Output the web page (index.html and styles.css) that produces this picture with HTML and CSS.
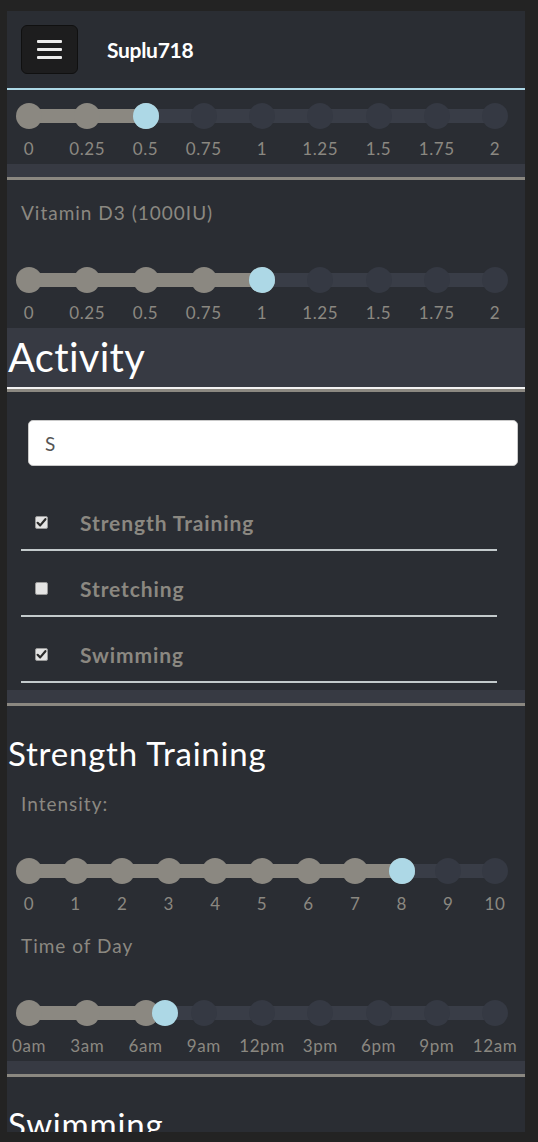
FILE: index.html
```html
<!DOCTYPE html>
<html lang="en">
<head>
<meta charset="utf-8">
<title>Suplu718</title>
<link rel="stylesheet" href="styles.css">
</head>
<body>
<div class="app">
  <header class="topbar">
    <button class="menu-btn" type="button" aria-label="Menu">
      <span class="bar"></span><span class="bar"></span><span class="bar"></span>
    </button>
    <span class="brand">Suplu718</span>
  </header>

  <main class="content">
    <section class="supp supp-first">
      <div class="slider" style="--pct:0.25">
        <div class="track"></div>
        <span class="dot on"></span><span class="dot on"></span><span class="dot on"></span><span class="dot"></span><span class="dot"></span><span class="dot"></span><span class="dot"></span><span class="dot"></span><span class="dot"></span>
        <span class="thumb"></span>
      </div>
      <div class="ticks">
        <span class="tick">0</span><span class="tick">0.25</span><span class="tick">0.5</span><span class="tick">0.75</span><span class="tick">1</span><span class="tick">1.25</span><span class="tick">1.5</span><span class="tick">1.75</span><span class="tick">2</span>
      </div>
    </section>
    <div class="band"></div>

    <section class="supp">
      <div class="field-label">Vitamin D3 (1000IU)</div>
      <div class="slider" style="--pct:0.5">
        <div class="track"></div>
        <span class="dot on"></span><span class="dot on"></span><span class="dot on"></span><span class="dot on"></span><span class="dot on"></span><span class="dot"></span><span class="dot"></span><span class="dot"></span><span class="dot"></span>
        <span class="thumb"></span>
      </div>
      <div class="ticks">
        <span class="tick">0</span><span class="tick">0.25</span><span class="tick">0.5</span><span class="tick">0.75</span><span class="tick">1</span><span class="tick">1.25</span><span class="tick">1.5</span><span class="tick">1.75</span><span class="tick">2</span>
      </div>
    </section>

    <div class="section-head">
      <h1 class="section-title">Activity</h1>
    </div>

    <section class="activity">
      <input class="search" type="text" value="S" aria-label="Search activities">
      <ul class="act-list">
        <li class="act-item">
          <span class="check checked"><svg viewBox="0 0 13 13" width="13" height="13"><path d="M2.6 6.8 L5.2 9.4 L10.4 3.2" fill="none" stroke="#2b2b2b" stroke-width="2.2" stroke-linecap="round" stroke-linejoin="round"/></svg></span>
          <span class="act-name">Strength Training</span>
        </li>
        <li class="act-item">
          <span class="check"></span>
          <span class="act-name">Stretching</span>
        </li>
        <li class="act-item">
          <span class="check checked"><svg viewBox="0 0 13 13" width="13" height="13"><path d="M2.6 6.8 L5.2 9.4 L10.4 3.2" fill="none" stroke="#2b2b2b" stroke-width="2.2" stroke-linecap="round" stroke-linejoin="round"/></svg></span>
          <span class="act-name">Swimming</span>
        </li>
      </ul>
    </section>
    <div class="band"></div>

    <section class="detail">
      <h2 class="detail-title">Strength Training</h2>
      <div class="field-label field-label-tight">Intensity:</div>
      <div class="slider" style="--pct:0.8">
        <div class="track"></div>
        <span class="dot on"></span><span class="dot on"></span><span class="dot on"></span><span class="dot on"></span><span class="dot on"></span><span class="dot on"></span><span class="dot on"></span><span class="dot on"></span><span class="dot on"></span><span class="dot"></span><span class="dot"></span>
        <span class="thumb"></span>
      </div>
      <div class="ticks">
        <span class="tick">0</span><span class="tick">1</span><span class="tick">2</span><span class="tick">3</span><span class="tick">4</span><span class="tick">5</span><span class="tick">6</span><span class="tick">7</span><span class="tick">8</span><span class="tick">9</span><span class="tick">10</span>
      </div>
      <div class="field-label field-label-mid">Time of Day</div>
      <div class="slider" style="--pct:0.2917">
        <div class="track"></div>
        <span class="dot on"></span><span class="dot on"></span><span class="dot on"></span><span class="dot"></span><span class="dot"></span><span class="dot"></span><span class="dot"></span><span class="dot"></span><span class="dot"></span>
        <span class="thumb"></span>
      </div>
      <div class="ticks">
        <span class="tick">0am</span><span class="tick">3am</span><span class="tick">6am</span><span class="tick">9am</span><span class="tick">12pm</span><span class="tick">3pm</span><span class="tick">6pm</span><span class="tick">9pm</span><span class="tick">12am</span>
      </div>
    </section>
    <div class="band"></div>

    <section class="detail">
      <h2 class="detail-title">Swimming</h2>
    </section>
  </main>
</div>
</body>
</html>
```

FILE: styles.css
```css
* {
  box-sizing: border-box;
}

html, body {
  margin: 0;
  padding: 0;
  background: #232323;
}

body {
  font-family: "Lato", "Liberation Sans", sans-serif;
  color: #8b8881;
  padding: 11px 13px 10px 7px;
}

.app {
  width: 518px;
  height: 1121px;
  overflow: hidden;
  background: #2a2d33;
  display: flex;
  flex-direction: column;
}

/* Header */
.topbar {
  flex: 0 0 auto;
  height: 79px;
  border-bottom: 2px solid #add8e6;
  display: flex;
  align-items: center;
  padding-left: 14px;
  gap: 29px;
}

.menu-btn {
  width: 57px;
  height: 49px;
  background: #1d1d1e;
  border: 1px solid #101010;
  border-radius: 6px;
  display: flex;
  flex-direction: column;
  align-items: center;
  justify-content: center;
  gap: 5px;
  padding: 0;
}

.menu-btn .bar {
  display: block;
  width: 25px;
  height: 3px;
  background: #ececec;
  border-radius: 1px;
}

.brand {
  color: #ffffff;
  font-weight: 700;
  font-size: 21px;
  letter-spacing: -0.3px;
}

.content {
  flex: 1 1 auto;
  display: flex;
  flex-direction: column;
}

/* Supplement sections */
.supp {
  padding-bottom: 5px;
}

.supp-first {
  padding-top: 13px;
}

.field-label {
  margin: 23px 0 0 14px;
  font-size: 19px;
  line-height: 20px;
  letter-spacing: 1px;
  color: #8b8881;
}

.field-label-tight {
  margin-top: 21px;
}

.field-label-mid {
  margin-top: 22px;
}

/* Slider */
.slider {
  position: relative;
  margin: 44px 17px 0 9px;
  height: 26px;
  display: flex;
  justify-content: space-between;
  align-items: center;
}

.supp-first .slider {
  margin-top: 0;
}

.track {
  position: absolute;
  left: 13px;
  right: 13px;
  top: 6px;
  height: 14px;
  background: linear-gradient(to right, #8b8881 0, #8b8881 calc(var(--pct) * 100%), #393d47 calc(var(--pct) * 100%), #393d47 100%);
}

.dot {
  position: relative;
  width: 26px;
  height: 26px;
  border-radius: 50%;
  background: #353943;
}

.dot.on {
  background: #8b8881;
}

.thumb {
  position: absolute;
  top: 0;
  left: calc((100% - 26px) * var(--pct));
  width: 26px;
  height: 26px;
  border-radius: 50%;
  background: #add8e6;
}

.ticks {
  margin: 10px 17px 0 9px;
  height: 20px;
  display: flex;
  justify-content: space-between;
}

.tick {
  width: 26px;
  display: flex;
  justify-content: center;
  white-space: nowrap;
  font-size: 17px;
  line-height: 20px;
  color: #8b8881;
  letter-spacing: 0.6px;
}

/* Separator band */
.band {
  flex: 0 0 auto;
  height: 16px;
  background: #373a43;
  border-bottom: 3px solid #8b8881;
}

/* Activity */
.section-head {
  height: 61px;
  background: #373a43;
  border-bottom: 2px solid #f2f2f2;
}

.section-title {
  margin: 0 0 0 1px;
  font-size: 40px;
  line-height: 59px;
  font-weight: 400;
  letter-spacing: 0.3px;
  color: #ffffff;
}

.activity {
  border-top: 3px solid #8b8881;
  padding: 28px 0 7px 0;
}

.search {
  display: block;
  margin: 0 7px 0 21px;
  width: 490px;
  height: 46px;
  border: 1px solid #c9c9c9;
  border-radius: 5px;
  background: #ffffff;
  padding: 0 16px;
  font-family: "Lato", "Liberation Sans", sans-serif;
  font-size: 19px;
  color: #555555;
  outline: none;
}

.act-list {
  list-style: none;
  margin: 19px 28px 0 14px;
  padding: 0;
}

.act-item {
  height: 66px;
  padding: 28px 0 0 14px;
  border-bottom: 2px solid #c3cacc;
  display: flex;
  align-items: flex-start;
  gap: 32px;
}

.check {
  flex: 0 0 auto;
  width: 13px;
  height: 13px;
  margin-top: 3px;
  border: 1px solid #9a9a9a;
  border-radius: 2px;
  background: #e4e4e4;
  display: flex;
}

.check svg {
  display: block;
  margin: -1px;
}

.act-name {
  font-size: 21px;
  line-height: 20px;
  font-weight: 700;
  letter-spacing: 0.9px;
  color: #8b8881;
}

/* Detail sections */
.detail {
  padding-bottom: 5px;
}

.detail-title {
  margin: 27px 0 0 1px;
  font-size: 33px;
  line-height: 40px;
  font-weight: 400;
  letter-spacing: 0.8px;
  color: #ffffff;
}
```
